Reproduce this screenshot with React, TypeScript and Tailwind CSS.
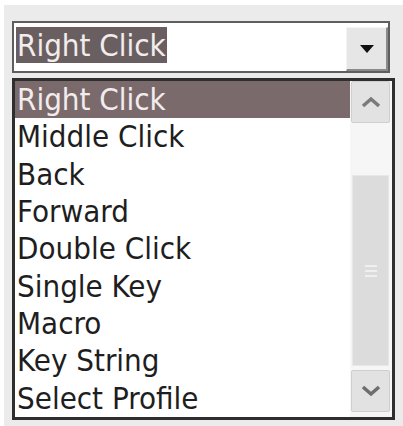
import React from "react";

const items = [
  "Right Click",
  "Middle Click",
  "Back",
  "Forward",
  "Double Click",
  "Single Key",
  "Macro",
  "Key String",
  "Select Profile",
];

export default function App() {
  const font = {
    fontFamily: '"DejaVu Sans Condensed", "DejaVu Sans", sans-serif',
    fontStretch: "condensed" as const,
  };
  return (
    <div className="w-[403px] h-[426px] bg-white pt-[5px] pl-[4px] overflow-hidden" style={font}>
      <div className="h-full bg-[#ebebeb] pl-[8px] pt-[16px]">
        {/* Combo box */}
        <div className="w-[378px] h-[52px] border-2 border-[#5e5e5e] bg-white flex items-start pt-[4px] pl-[2px]">
          <div className="h-[36px] px-[1px] bg-[#6a5f60] text-[#f3ecec] text-[31px] leading-[36px]">
            Right Click
          </div>
          <div className="ml-auto self-end w-[42px] h-[44px] bg-[#e6e6e6] border-r-2 border-b-2 border-[#8a8a8a] border-l border-t border-l-[#f4f4f4] border-t-[#f4f4f4] flex items-center justify-center">
            <svg width="14" height="8" viewBox="0 0 14 8">
              <polygon points="0,0 14,0 7,8" fill="#111" />
            </svg>
          </div>
        </div>
        {/* List */}
        <div className="mt-[5px] w-[383px] h-[342px] border-[3px] border-[#2e2e2e] bg-white flex">
          <div className="flex-1 flex flex-col">
            {items.map((t, i) => (
              <div
                key={t}
                className={
                  "h-[37.33px] pl-[2px] text-[31px] leading-[37px] " +
                  (i === 0 ? "bg-[#7a6a6c] text-[#f3ecec]" : "text-[#1e1e1e]")
                }
              >
                {t}
              </div>
            ))}
          </div>
          <div className="w-[42px] flex flex-col pl-[1px] pr-[2px] bg-[#f6f6f6]">
            <div className="h-[42px] bg-[#e2e2e2] border border-[#cfcfcf] rounded-[2px] flex items-center justify-center">
              <svg width="20" height="12" viewBox="0 0 20 12">
                <polyline points="2,10 10,3 18,10" fill="none" stroke="#7a7a7a" strokeWidth="3.5" />
              </svg>
            </div>
            <div className="h-[52px]" />
            <div className="h-[191px] mx-[1px] bg-[#dcdcdc] border border-[#e8e8e8] flex flex-col items-center justify-center gap-[3px]">
              <div className="w-[12px] h-[2px] bg-[#f0f0f0]" />
              <div className="w-[12px] h-[2px] bg-[#f0f0f0]" />
              <div className="w-[12px] h-[2px] bg-[#f0f0f0]" />
            </div>
            <div className="h-[4px]" />
            <div className="h-[42px] bg-[#e2e2e2] border border-[#cfcfcf] rounded-[2px] flex items-center justify-center">
              <svg width="20" height="12" viewBox="0 0 20 12">
                <polyline points="2,2 10,9 18,2" fill="none" stroke="#6e6e6e" strokeWidth="3.5" />
              </svg>
            </div>
          </div>
        </div>
      </div>
    </div>
  );
}
